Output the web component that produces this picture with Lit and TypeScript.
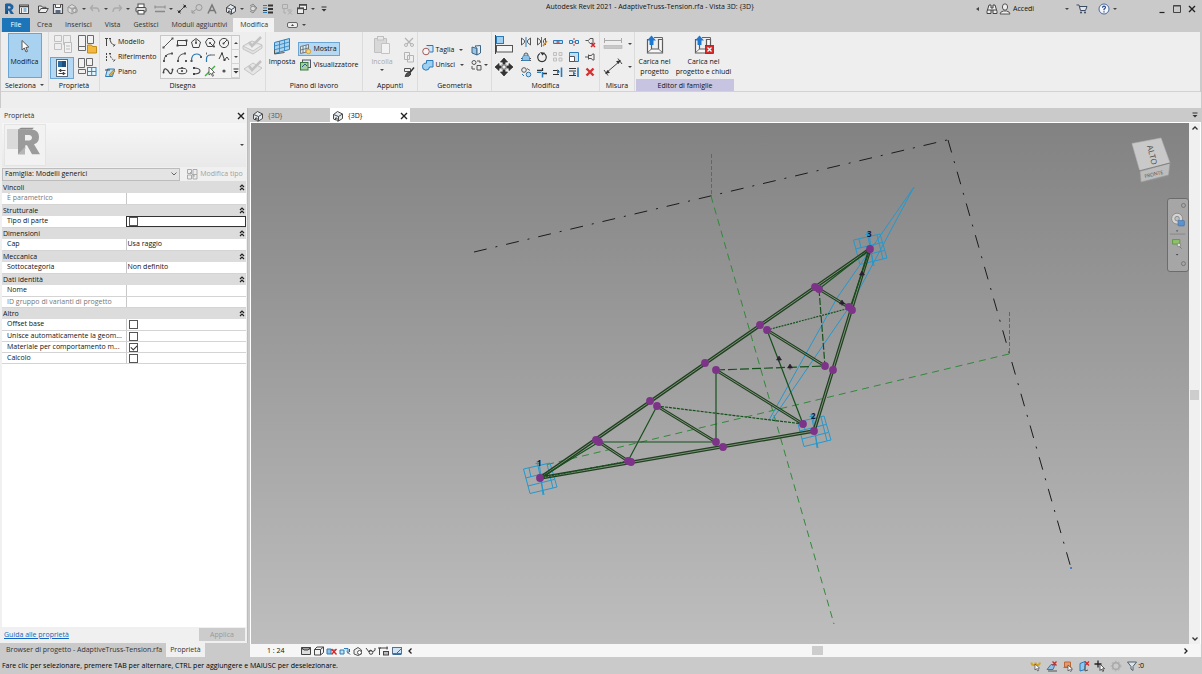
import { LitElement, html, svg, css, nothing, TemplateResult } from "lit";
import { customElement, property, state } from "lit/decorators.js";
import { classMap } from "lit/directives/class-map.js";

type Icon = { w: number; h: number; body: TemplateResult };

const K = "#4a4a4a";
const B = "#2a7ab8";
const L = "#9fd0f2";
const G = "#b4b4b4";

const icons: Record<string, Icon> = {
  // title bar
  logo: { w: 12, h: 12, body: svg`<path d="M2 1h5.500q3 .4 3 3t-2.200 3L11 11H7.600L6 7.800H5V11H2zM5 3.200v2.400h1.600q1-.2 1-1.200t-1-1.200z" fill="#2062a0" fill-rule="evenodd"/><path d="M2 1l1.500-.6h5L7.500 1zM5 7.800H3.500V11H5z" fill="#174a7c"/>` },
  home: { w: 12, h: 12, body: svg`<rect x="1.500" y="2" width="9" height="8.500" fill="#f2f2f2" stroke="${K}"/><path d="M1 3.500h10" stroke="${K}" stroke-width="1.500"/><path d="M3.500 5v5M5.500 6h3M5.500 8h3" stroke="${B}"/>` },
  open: { w: 12, h: 12, body: svg`<path d="M1.500 9.500V3h3l1 1.300h3.500V5.500M1.500 9.500L3.800 5.500h7.500L9 9.500z" fill="#eee" stroke="${K}"/>` },
  save: { w: 12, h: 12, body: svg`<path d="M1.500 1.500h9v9h-9z" fill="#e8eef4" stroke="${K}" stroke-width="1.200"/><path d="M3.500 1.500v3h5v-3" fill="#fff" stroke="${K}"/><rect x="3.500" y="7" width="5" height="3.500" fill="#5b6b7a"/>` },
  sync: { w: 12, h: 12, body: svg`<path d="M1 4l4-2.500L9 4v4.500L5 11 1 8.500zM1 4l4 2 4-2M5 6v5" fill="#ddd" stroke="#999"/><circle cx="8" cy="7.500" r="2.300" fill="none" stroke="#999"/>` },
  undo: { w: 12, h: 12, body: svg`<path d="M4 2L1.500 5 4 8M2 5h5q3 0 3 4" fill="none" stroke="#aaa" stroke-width="1.300"/>` },
  redo: { w: 12, h: 12, body: svg`<path d="M8 2l2.500 3L8 8M10 5H5Q2 5 2 9" fill="none" stroke="#aaa" stroke-width="1.300"/>` },
  print: { w: 12, h: 12, body: svg`<rect x="3" y="1" width="6" height="4" fill="#fff" stroke="${K}"/><rect x="1" y="4.500" width="10" height="4.500" rx="1" fill="#ddd" stroke="${K}"/><rect x="3" y="7.500" width="6" height="3.500" fill="#fff" stroke="${K}"/>` },
  measure: { w: 12, h: 12, body: svg`<path d="M1 4h10M1 2.500v3M11 2.500v3" stroke="#888"/><path d="M1 8.500h10" stroke="#888" stroke-width="1.500"/>` },
  dim: { w: 12, h: 12, body: svg`<path d="M2.500 9.500l7-7" stroke="${K}"/><path d="M1.500 7.500l3 3M7.500 1.500l3 3" stroke="${K}"/><path d="M2 10l3-1-2-2zM10 2L7 3l2 2z" fill="#222"/>` },
  tag: { w: 12, h: 12, body: svg`<circle cx="8" cy="4.500" r="3" fill="none" stroke="#999"/><path d="M1 9.500l4-3M1 7v3h3" fill="none" stroke="#999"/>` },
  textA: { w: 12, h: 12, body: svg`<path d="M2 10.500L6 2l4 8.500M3.500 7.500h5" fill="none" stroke="#777" stroke-width="1.500"/>` },
  view3d: { w: 12, h: 12, body: svg`<path d="M1.500 4.500L5.500 1.500l5 2.500v4.500L6.500 11H5V8H3.500v2l-2-1z" fill="#e4ebf0" stroke="${K}"/><path d="M1.500 4.500l5 2 4-2.500M6.500 6.500V11" fill="none" stroke="${K}"/>` },
  section: { w: 12, h: 12, body: svg`<path d="M3 3l3-2 4 4-4 5-3-2" fill="none" stroke="#8a8a8a"/><circle cx="6" cy="5.500" r="2.400" fill="#ddd" stroke="#8a8a8a"/>` },
  thin: { w: 12, h: 12, body: svg`<path d="M1 2.500h4M1 5h4M1 9.500h4" stroke="${B}" stroke-width="1"/><path d="M6 2.500h5M6 6h5M6 9.500h5" stroke="#333" stroke-width="2"/><path d="M1 7.500h4" stroke="#333"/>` },
  closeHidden: { w: 12, h: 12, body: svg`<path d="M1.500 1.500h5v4h-5zM6.500 7h4M7 7.500l4 4M11 7.500l-4 4M3 6v4h2" fill="none" stroke="#aaa"/>` },
  switchWin: { w: 12, h: 12, body: svg`<rect x="3.500" y="1.500" width="7" height="5" fill="#eee" stroke="${K}"/><rect x="1.500" y="5" width="6" height="5.500" fill="#eee" stroke="${K}"/><path d="M1 5.500h7M3.500 2h7" stroke="${K}" stroke-width="1.500"/>` },
  custom: { w: 12, h: 12, body: svg`<path d="M3.500 4h5" stroke="#333"/><path d="M3.500 6h5L6 8.500z" fill="#333"/>` },
  binoc: { w: 12, h: 12, body: svg`<path d="M3 2h2v3h2V2h2l2 6.500v2H7V7H5v3.500H1v-2z" fill="#eee" stroke="#444"/><path d="M5 7H1.500M7 7h3.500" stroke="#444"/>` },
  user: { w: 12, h: 12, body: svg`<ellipse cx="6" cy="4" rx="2.600" ry="3.200" fill="#eee" stroke="#555"/><path d="M1 11q.2-2.500 3.500-3h3q3.300.5 3.500 3z" fill="#eee" stroke="#555"/>` },
  cart: { w: 12, h: 12, body: svg`<path d="M.5 2H3l1.500 5.500h5L11 3.500H3.500" fill="#dfe3ea" stroke="#3c4a60"/><circle cx="5" cy="9.500" r="1" fill="#3c4a60"/><circle cx="9" cy="9.500" r="1" fill="#3c4a60"/>` },
  help: { w: 12, h: 12, body: svg`<circle cx="6" cy="6" r="5" fill="#f4f7fa" stroke="#3a5a94" stroke-width=".9"/><path d="M4.500 4.700Q4.600 3.200 6 3.200t1.500 1.300Q7.500 5.300 6 6.200v1M6 8.200v1.200" fill="none" stroke="#27468a" stroke-width="1.200"/>` },
  min: { w: 12, h: 12, body: svg`<path d="M3.500 9.500h5" stroke="#222" stroke-width="1.200"/>` },
  max: { w: 12, h: 12, body: svg`<path d="M2.500 2.500h7v7h-7z" fill="none" stroke="#444"/><path d="M2.500 3h7" stroke="#444"/>` },
  close: { w: 12, h: 12, body: svg`<path d="M3 3l6 6M9 3l-6 6" stroke="#222" stroke-width="1.400"/>` },
  play: { w: 12, h: 8, body: svg`<rect x=".5" y="1.500" width="10" height="5" rx="1.500" fill="#eee" stroke="#666"/><path d="M4 5h3L5.500 3z" fill="#444"/>` },
  // ribbon, select and properties
  cursor: { w: 12, h: 15, body: svg`<path d="M3 1.500v9.500l2.300-2 1.700 4 1.500-.7L6.900 8.500 9.800 8z" fill="#fff" stroke="#555"/>` },
  famCat: { w: 20, h: 20, body: svg`<path d="M1.500 1.500h7v6h-7zM10.500 1.500h7v9h-7zM1.500 9.500h7v6h-7z" fill="#eee" stroke="#c0c0c0"/><path d="M11.500 8.500h7v10h-7z" fill="#f2f2f2" stroke="#bbb"/><path d="M13 12h4M13 15h4" stroke="#bbb"/>` },
  famTypes: { w: 20, h: 20, body: svg`<path d="M1.500 1.500h7v11h-7zM10.500 1.500h6v8h-6zM1.500 12.500h7v4h-7z" fill="#f2f2f2" stroke="#6a6a6a"/><path d="M10.500 11h4l1 1.500h4V19h-9z" fill="#f3b93e" stroke="#c08a1c"/>` },
  propPal: { w: 20, h: 20, body: svg`<rect x="4.500" y="1.500" width="11" height="17" fill="#fff" stroke="#5a6b7c"/><rect x="6" y="3" width="8" height="6" fill="#2c6ea6"/><path d="M10 3h4v6h-4z" fill="#1f4f7c"/><path d="M6.500 12.500h7M6.500 15.500h7" stroke="#444"/><path d="M8.500 11v3M11.500 14v3" stroke="#444" stroke-width="1.500"/>` },
  famTable: { w: 20, h: 20, body: svg`<path d="M1.500 1.500h6v9h-6zM9.500 1.500h6v7h-6zM1.500 12.500h7v4h-7z" fill="#f2f2f2" stroke="#6a6a6a"/><rect x="10.500" y="10.500" width="8.500" height="8" fill="#e8f5fd" stroke="#2a8ac8"/><path d="M14.700 10.500v8M10.500 14.500H19" stroke="#2a8ac8"/>` },
  modelLine: { w: 12, h: 12, body: svg`<path d="M2.500 2v8M1 2.500h3" stroke="#444"/><path d="M6 2q0 6 5 7.500" fill="none" stroke="#444"/><path d="M5 2.500h2M9.500 10.500l1.500-2" stroke="#444"/>` },
  refLine: { w: 12, h: 12, body: svg`<path d="M2.500 2v8" stroke="#444" stroke-dasharray="2 1"/><path d="M6 2q0 6 5 7.500" fill="none" stroke="#444" stroke-dasharray="2 1"/><path d="M5 2.500h2M9.500 10.500l1.500-2" stroke="#444"/>` },
  plane: { w: 12, h: 12, body: svg`<path d="M1.500 10.500l2-7.500h7l-2 7.500z" fill="#bfe0f5" stroke="${B}"/><path d="M5 9l4.500-5 1.500 1.200L6.500 10z" fill="#e8b040" stroke="#8a6a20" stroke-width=".6"/><path d="M1 4h5" stroke="#444"/>` },
  line: { w: 12, h: 12, body: svg`<path d="M1.500 10.500l9-9" stroke="#555"/><path d="M.5 9.500h2v2h-2zM9.500.5h2v2h-2z" fill="#555"/>` },
  rect: { w: 12, h: 12, body: svg`<path d="M1.500 3.500h9v5h-9z" fill="none" stroke="#444"/><path d="M9.500 2.500h2v2h-2zM.5 7.500h2v2h-2z" fill="#444"/>` },
  poly1: { w: 12, h: 12, body: svg`<path d="M6 1.500L10.500 5 9 10.500H3L1.500 5zM6 6V2.500" fill="none" stroke="#444"/><circle cx="6" cy="6" r="1" fill="#444"/>` },
  poly2: { w: 12, h: 12, body: svg`<path d="M4 1.500h4L11 5 8.500 9.500h-5L1.500 5zM6 6l3.500 3.500" fill="none" stroke="#444"/><circle cx="6" cy="6" r="1" fill="#444"/><circle cx="10" cy="9.500" r="1" fill="#444"/>` },
  circle: { w: 12, h: 12, body: svg`<circle cx="6" cy="6" r="4.600" fill="none" stroke="#444"/><path d="M5.500 6.500L9 3" stroke="#444"/><circle cx="5.500" cy="6.500" r="1" fill="#444"/>` },
  arc1: { w: 12, h: 12, body: svg`<path d="M2 10Q2 3 9.500 2.500" fill="none" stroke="#555"/><path d="M1 9h2v2H1zM9 1.500h2v2H9zM3 4h2v2H3z" fill="#555"/>` },
  arc2: { w: 12, h: 12, body: svg`<path d="M2 10Q2 3 9 2.500" fill="none" stroke="#555"/><path d="M1 9h2v2H1zM9 9h2v2H9zM8 1.500h2v2H8z" fill="#555"/>` },
  arc3: { w: 12, h: 12, body: svg`<path d="M1.500 10q0-7 5-7 4 0 4.500 3" fill="none" stroke="${B}" stroke-width="1.200"/><path d="M.5 9h2v2h-2zM10 5h2v2h-2z" fill="#555"/>` },
  fillet: { w: 12, h: 12, body: svg`<path d="M2.500 11V8q0-4 4-4" fill="none" stroke="${B}" stroke-width="1.200"/><path d="M6 4h5M2.500 1.500v2" stroke="#666"/>` },
  spline1: { w: 12, h: 12, body: svg`<path d="M1 8L4 2l2.500 7L9 6l2 3" fill="none" stroke="#444"/><path d="M3 1.500h2v2H3zM5.500 8h2v2h-2z" fill="#444"/>` },
  spline2: { w: 12, h: 12, body: svg`<path d="M1.500 7Q2 3 4 4t3.500 4Q10 10 10.500 5" fill="none" stroke="#444" stroke-width="1.200"/><circle cx="1.500" cy="7.500" r="1" fill="#444"/><circle cx="10.500" cy="4.500" r="1" fill="#444"/>` },
  ellipse: { w: 12, h: 12, body: svg`<ellipse cx="6" cy="6" rx="4.800" ry="2.800" fill="none" stroke="#444"/><circle cx="6" cy="6" r="1.100" fill="#444"/><path d="M6 2v2" stroke="#444" stroke-width="1.500"/>` },
  halfEll: { w: 12, h: 12, body: svg`<path d="M4 3q6 0 6 3T4 9" fill="none" stroke="#444" stroke-width="1.100"/><path d="M3 2h2v2H3zM3 8h2v2H3z" fill="#444"/>` },
  pick: { w: 12, h: 12, body: svg`<path d="M1 11L11 1" stroke="#44b044" stroke-width="1.500"/><path d="M5 2v8l2-1.700 1.500 3 1-.5L8.200 8l2.300-.5z" fill="#fff" stroke="#444" stroke-width=".8"/>` },
  point: { w: 12, h: 12, body: svg`<circle cx="6" cy="6" r="1.600" fill="#555"/>` },
  drawFace: { w: 22, h: 20, body: svg`<path d="M1 11l9-5 10 4-9 6zM1 11v3l10 5 9-6v-3" fill="#e2e2e2" stroke="#c4c4c4"/><path d="M7 7l3 4 9-9" fill="none" stroke="#c2c2c2" stroke-width="2.500"/>` },
  drawWp: { w: 22, h: 20, body: svg`<path d="M2 11l9-6 9 5-9 7z" fill="#e6e6e6" stroke="#c4c4c4"/><path d="M7 8l3 4 9-9" fill="none" stroke="#c2c2c2" stroke-width="2.500"/>` },
  setWp: { w: 18, h: 18, body: svg`<path d="M1.500 5.500l15-4v11l-15 4z" fill="#a9d3ef" stroke="#3080b8"/><path d="M6.500 4v11.200M11.500 2.700V14M1.500 9l15-4M1.500 12.800l15-4" stroke="#3080b8" stroke-width=".8"/><path d="M1.500 13v4l10-1.500" fill="none" stroke="#555"/>` },
  showWp: { w: 13, h: 12, body: svg`<path d="M1.500 3.500l8-2v7l-8 2zM4 3v7M7 2.200v7M1.500 7l8-2" fill="#d8ecfa" stroke="#666" stroke-width=".8"/><circle cx="9.500" cy="8.500" r="2.200" fill="#f6d670" stroke="#d0962a" stroke-width=".8"/>` },
  viewer: { w: 13, h: 12, body: svg`<rect x="3.500" y="1" width="8" height="7.500" fill="#dfe9f2" stroke="#556"/><rect x="1.500" y="3.500" width="7.500" height="7.500" fill="#a5cfa0" stroke="#3d7a44"/><path d="M3 8l3-3 2 2" fill="none" stroke="#2d5f86"/>` },
  // clipboard and geometry
  paste: { w: 18, h: 20, body: svg`<path d="M1.500 3.500h12v14h-12z" fill="#d8d8d8" stroke="#c0c0c0"/><rect x="4.500" y="1.500" width="6" height="3.500" fill="#e8e8e8" stroke="#c0c0c0"/><path d="M8.500 8.500h8v10h-8z" fill="#f2f2f2" stroke="#c4c4c4"/>` },
  cut: { w: 12, h: 12, body: svg`<path d="M2 2l6 6M10 2L4 8" stroke="${G}" stroke-width="1.300"/><circle cx="3" cy="9" r="1.500" fill="none" stroke="${G}"/><circle cx="9" cy="9" r="1.500" fill="none" stroke="${G}"/>` },
  copy: { w: 12, h: 12, body: svg`<path d="M1.500 1.500h5v7h-5zM4.500 4.500h6v6.500h-6z" fill="#efefef" stroke="${G}"/>` },
  match: { w: 12, h: 12, body: svg`<path d="M1.500 2.500h6v3h-6z" fill="#eee" stroke="#555"/><path d="M11 1.500L6.500 7" stroke="#333" stroke-width="1.500"/><path d="M2 10.500q1-4 4-4.500l2 2q-1 3-6 2.500z" fill="#555" stroke="#333" stroke-width=".8"/>` },
  cutGeo: { w: 12, h: 12, body: svg`<path d="M4.500 1.500h6.500V8H8" fill="#cfe6f7" stroke="${B}"/><circle cx="4" cy="7.500" r="3.300" fill="#f6f6f6" stroke="#a05a5a"/>` },
  joinGeo: { w: 12, h: 12, body: svg`<path d="M4.500 1.500h6.500V8H7.500A3.500 3.500 0 1 1 4.500 4.200z" fill="${L}" stroke="${B}"/>` },
  faces: { w: 12, h: 12, body: svg`<path d="M2 3l5 1.500V11L2 9z" fill="#9cc4e4" stroke="#3d6585"/><path d="M5 2l5.500-.5V9L7 11V4.500z" fill="#e4eef6" stroke="#3d6585"/>` },
  demolish: { w: 12, h: 12, body: svg`<circle cx="4" cy="3.500" r="2" fill="none" stroke="#555"/><path d="M7 6.500h4V11H7zM2 7v3h3M7 2h3v2" fill="none" stroke="#555"/>` },
  // modify
  align: { w: 20, h: 19, body: svg`<path d="M1.500 0v19" stroke="#444"/><rect x="2.500" y="1.500" width="7" height="7" fill="${L}" stroke="${B}"/><rect x="2.500" y="10.500" width="16" height="6.500" fill="#f4f4f4" stroke="#555"/>` },
  move: { w: 20, h: 20, body: svg`<rect x="8" y="8" width="4" height="4" fill="none" stroke="#666"/><path d="M10 1l3.500 4H11v2H9V5H6.500zM10 19l3.500-4H11v-2H9v2H6.500zM1 10l4-3.500V9h2v2H5v2.500zM19 10l-4-3.500V9h-2v2h2v2.500z" fill="#333" stroke="#333" stroke-width=".8"/>` },
  mirror1: { w: 12, h: 12, body: svg`<path d="M1.500 2v7l3-2.500v-2zM10.500 2v7l-3-2.500v-2z" fill="#f0f0f0" stroke="#555"/><path d="M6 1v10" stroke="${B}"/>` },
  mirror2: { w: 12, h: 12, body: svg`<path d="M1.500 2v7l3-2.500v-2zM9.500 2v7l-2-2.500v-2z" fill="#f0f0f0" stroke="#555"/><path d="M5.500 1v10" stroke="${B}"/><path d="M7 10l4-5" stroke="#d08a2a" stroke-width="1.500"/>` },
  split1: { w: 12, h: 12, body: svg`<path d="M1.500 4.500h9v3h-9z" fill="#bfe0f5" stroke="${B}"/><path d="M4.500 6h3" stroke="#c04040" stroke-width="1.500"/>` },
  split2: { w: 12, h: 12, body: svg`<path d="M1.500 4.500h3v3h-3zM7.500 4.500h3v3h-3z" fill="#dceefa" stroke="${B}"/><path d="M6 2v8" stroke="#c04040" stroke-dasharray="2 1"/>` },
  unpin: { w: 12, h: 12, body: svg`<path d="M1.500 4.500h3l1.500-2h3v5H6l-1.500-2" fill="#eee" stroke="#555"/><path d="M7 7l4 4M11 7l-4 4" stroke="#d02828" stroke-width="1.500"/>` },
  offset: { w: 12, h: 12, body: svg`<path d="M1 9.500h10M1 7.500h3V4q0-2 2-2t2 2v3.500h3" fill="none" stroke="#555"/><path d="M2.500 9.500h7V6q-1-2-3.500-2T2.500 6z" fill="#8fc1e6" stroke="${B}" stroke-width=".7"/>` },
  rotate: { w: 12, h: 12, body: svg`<path d="M4 2.500a4.300 4.300 0 1 0 4 0" fill="none" stroke="#333" stroke-width="1.200"/><path d="M4 1l5 .8L6.500 4.500z" fill="#333"/>` },
  array: { w: 12, h: 12, body: svg`<path d="M1.500 1.500h3v3h-3zM7 1.500h3v3H7zM1.500 7h3v3h-3zM7 7h3v3H7z" fill="#e6e6e6" stroke="#c0c0c0"/>` },
  scale: { w: 12, h: 12, body: svg`<path d="M1.500 1.500h9v9h-9z" fill="#bfe0f5" stroke="${B}"/><path d="M1.500 5.500h5v5h-5z" fill="#fff" stroke="#555"/>` },
  pin: { w: 12, h: 12, body: svg`<path d="M1 6h3.500M4.500 3.500v5M4.500 4.500h3l1-1.500h1.500v6H8.500l-1-1.500h-3" fill="none" stroke="#555"/>` },
  copyEl: { w: 12, h: 12, body: svg`<circle cx="4" cy="4" r="2.300" fill="none" stroke="#555"/><circle cx="8.500" cy="8.500" r="2.300" fill="#bfe0f5" stroke="${B}"/><path d="M7 2.500l3 2M2 8l2 2" stroke="${B}"/>` },
  trim: { w: 12, h: 12, body: svg`<path d="M1 4.500h5M6.500 2v3M6 7.500h5" stroke="#333" stroke-width="1.300"/><path d="M6.500 6v5.500" stroke="${B}" stroke-width="1.500"/><path d="M1 6.500h4" stroke="${B}"/>` },
  trim1: { w: 12, h: 12, body: svg`<path d="M1 4.500h6M1 8.500h6" stroke="#333" stroke-width="1.200"/><path d="M5 3l3 3-3 2" fill="${B}"/><path d="M9.500 1.500v9.500" stroke="${B}" stroke-width="1.600"/>` },
  trim2: { w: 12, h: 12, body: svg`<path d="M1 2.500h7M1 5h7M1 9.500h7" stroke="#333" stroke-width="1.100"/><path d="M5 5.500l3 2-3 2z" fill="${B}"/><path d="M10 1.500v9.500" stroke="${B}" stroke-width="1.600"/>` },
  del: { w: 12, h: 12, body: svg`<path d="M2.500 2.500l7 7M9.500 2.500l-7 7" stroke="#d83030" stroke-width="2.400"/>` },
  measDist: { w: 20, h: 14, body: svg`<path d="M1 3.500h18M1.500 1v5M18.500 1v5" stroke="#aaa"/><rect x="1" y="8.500" width="18" height="3" fill="#c8c8c8" stroke="#b0b0b0" stroke-width=".6"/>` },
  measDim: { w: 20, h: 20, body: svg`<path d="M3 16L17 4" stroke="#444"/><path d="M1 13l4 5.500M15 1.500L19 7" stroke="#444"/><path d="M2 17l5-1.200-2.500-2.800zM18 3l-5 1.200L15.500 7z" fill="#333"/>` },
  load: { w: 18, h: 19, body: svg`<path d="M1.500 4.500h4V14h7V4.500h4V18h-15z" fill="#f6f6f6" stroke="#5c5c5c" stroke-width="1.200"/><path d="M1.500 17.500l4-3.500M16.500 17.500l-4-3.500" stroke="#777"/><path d="M8 2.500h8.500v4" fill="none" stroke="#666"/><path d="M5.500 .5L10 5.500H7.500V10h-4V5.500H1z" fill="#1f78d0"/>` },
  loadClose: { w: 20, h: 19, body: svg`<path d="M1.500 4.500h4V14h7V4.500h4V18h-15z" fill="#f6f6f6" stroke="#5c5c5c" stroke-width="1.200"/><path d="M1.500 17.500l4-3.500" stroke="#777"/><path d="M8 2.500h8.500v4" fill="none" stroke="#666"/><path d="M5.500 .5L10 5.500H7.500V10h-4V5.500H1z" fill="#1f78d0"/><rect x="11.500" y="10.500" width="8" height="8" fill="#d62a2a" stroke="#a81818" stroke-width=".8"/><path d="M13.500 12.500l4 4M17.500 12.500l-4 4" stroke="#fff" stroke-width="1.200"/>` },
  // properties
  bigR: { w: 40, h: 40, body: svg`<rect x="2" y="4" width="19" height="20" fill="#dadada"/><g transform="translate(3 -1) scale(1 .92)"><path d="M10 6h14q7 1 7 8 0 6-5 8l6 11h-8l-5-10h-2v10h-7z" fill="#9b9b9b"/><path d="M17 12v6h4q3-.5 3-3t-3-3z" fill="#efefef"/><path d="M10 6l3-2h13l-2 2z" fill="#8a8a8a"/><path d="M10 33l7-8v8z" fill="#b6b6b6"/></g>` },
  editType: { w: 12, h: 12, body: svg`<path d="M1.500 1.500h4v4h-4zM7 1.500h4v5H7zM1.500 7h4v4h-4zM7 6.500h4V11H7z" fill="#eee" stroke="#aaa"/><path d="M4 4l4 4M8 6v3" stroke="#aaa"/>` },
  collapse: { w: 6, h: 8, body: svg`<path d="M1 4l2-2 2 2M1 7l2-2 2 2" fill="none" stroke="#222" stroke-width="1.200"/>` },
  // view control bar
  vDetail: { w: 12, h: 10, body: svg`<path d="M1.500 1.500h9v7h-9zM1.500 1.500L4 4h4l2.500-2.500M1.500 3h9" fill="#ddd" stroke="#444"/>` },
  vStyle: { w: 12, h: 10, body: svg`<path d="M1.500 3.500h6V9h-6zM1.500 3.500l2.500-2.500h6.500L7.500 3.500M10.500 1v5.500L7.500 9" fill="#f4f4f4" stroke="#444"/>` },
  vSun: { w: 12, h: 10, body: svg`<path d="M1 3h4v5H1zM5 4h5" fill="#8fc1e6" stroke="${B}"/><path d="M5.500 3l5 5.500M10.500 3l-5 5.500" stroke="#d02828" stroke-width="1.400"/>` },
  vCrop: { w: 12, h: 10, body: svg`<path d="M1 4h4v4H1zM5 2.500h4v5" fill="#bfe0f5" stroke="${B}"/><path d="M8 5.500l3 3M10.500 3v3" stroke="#555"/>` },
  vLock: { w: 12, h: 10, body: svg`<path d="M2 4l4-2.500L9.500 4v4L6 9.500 2 8z" fill="#eee" stroke="#555"/><circle cx="7.500" cy="6.500" r="2" fill="#fff" stroke="#555"/>` },
  vGlass: { w: 12, h: 10, body: svg`<path d="M1 2l3 4 1-2 2 1" fill="none" stroke="#444"/><circle cx="6" cy="6.500" r="1.800" fill="none" stroke="#444"/><path d="M8 5.500Q11 5 10 2" fill="none" stroke="#444"/>` },
  vHide: { w: 12, h: 10, body: svg`<path d="M1.500 9V2h8.500" fill="none" stroke="#444"/><rect x="5.500" y="5.500" width="5" height="3.500" fill="#bbb" stroke="#444"/><path d="M0 2h3M9 .5v3" stroke="#444"/>` },
  vReveal: { w: 12, h: 10, body: svg`<rect x="1.500" y="1.500" width="9" height="6" fill="#cfe4f4" stroke="#5a7088"/><path d="M1.500 8.500h9M6 7l4-4" stroke="#3a6a9a"/>` },
  left: { w: 6, h: 8, body: svg`<path d="M4.500 1.500L2 4l2.500 2.500" fill="none" stroke="#222" stroke-width="1.300"/>` },
  right: { w: 6, h: 8, body: svg`<path d="M1.500 1.500L4 4 1.500 6.500" fill="none" stroke="#222" stroke-width="1.300"/>` },
  up: { w: 8, h: 6, body: svg`<path d="M1.500 4.500L4 2l2.500 2.500" fill="none" stroke="#333" stroke-width="1.300"/>` },
  down: { w: 8, h: 6, body: svg`<path d="M1.500 1.500L4 4l2.500-2.500" fill="none" stroke="#333" stroke-width="1.300"/>` },
  drop: { w: 8, h: 6, body: svg`<path d="M1.500 1.500L4 4l2.500-2.500" fill="none" stroke="#666" stroke-width="1"/>` },
  // status bar
  sLink: { w: 12, h: 12, body: svg`<path d="M1.500 2.500q0 2.500 2 2.500t2-2.500q0 2.500 2 2.500t2.500-2.500" fill="none" stroke="#d9a520" stroke-width="2"/><path d="M5 4v6l1.500-1.300 1.200 2.300 1-.5-1-2.200 1.800-.3z" fill="#fff" stroke="#444" stroke-width=".7"/>` },
  sUnder: { w: 12, h: 12, body: svg`<path d="M1 9.500l4-5h4l-2 5z" fill="#8fc1e6" stroke="#48749a"/><path d="M6.500 1.500l4 4M10.500 1.500l-4 4" stroke="#d02828" stroke-width="1.300"/><path d="M2 11h9" stroke="#555"/>` },
  sPin: { w: 12, h: 12, body: svg`<path d="M2.500 2h6v5h-6zM1.500 7.500h8" fill="#e79a68" stroke="#b8683a"/><path d="M6 5v6l1.500-1.300 1 1.800 1-.5-.8-1.900h1.800z" fill="#fff" stroke="#444" stroke-width=".7"/>` },
  sFace: { w: 12, h: 12, body: svg`<path d="M2 3.500l5-2v8l-5 1.500z" fill="#8fc8ec" stroke="${B}"/><path d="M7 1.500l4 4M11 1.500l-4 4" stroke="#d02828" stroke-width="1.300"/><path d="M7 6v5l3-1" fill="none" stroke="#555"/>` },
  sDrag: { w: 12, h: 12, body: svg`<path d="M4 .5v7M.5 4h7" stroke="#222" stroke-width="1.300"/><path d="M6 4v6.500L7.500 9l1.200 2.500 1-.5-1.100-2.300h2z" fill="#fff" stroke="#333" stroke-width=".8"/>` },
  sGear: { w: 12, h: 12, body: svg`<circle cx="6" cy="6" r="3.300" fill="none" stroke="#a8a8a8" stroke-width="1.500"/><circle cx="6" cy="6" r="4.800" fill="none" stroke="#a8a8a8" stroke-width="1" stroke-dasharray="1.500 2"/>` },
  sFilter: { w: 12, h: 12, body: svg`<path d="M1.500 2h9L7 6.500v4l-2-1.500V6.500z" fill="#dce4ea" stroke="#50606c"/>` },
};

const ic = (name: string) => {
  const i = icons[name];
  return html`<svg width=${i.w} height=${i.h} viewBox="0 0 ${i.w} ${i.h}" aria-hidden="true">${i.body}</svg>`;
};

const base = css`
  * { box-sizing: border-box; }
  svg { display: block; flex: none; }
  button, input, select { font: inherit; color: inherit; margin: 0; padding: 0; }
  button { background: none; border: 0; display: flex; align-items: center; justify-content: center; white-space: nowrap; }
  .caret { width: 0; height: 0; border: 2px solid transparent; border-top-color: #444; border-bottom: 0; flex: none; }
`;

/* ---------------------------------------------------------------- title bar */
@customElement("title-bar")
class TitleBar extends LitElement {
  static styles = [base, css`
    :host { display: flex; align-items: center; height: 18px; padding: 0 3px 1px 1px; }
    .tools, .right { display: flex; align-items: center; }
    .i { width: 15px; height: 16px; }
    .c { width: 7px; height: 16px; }
    .gap { width: 2px; }
    .wide { width: 4px; }
    .title { margin-left: 215px; margin-bottom: 3px; white-space: nowrap; }
    .right { margin-left: auto; }
    .login { gap: 2px; width: 64px; justify-content: flex-start; }
    .sep { width: 7px; }
    .back { width: 0; height: 0; border: 2px solid transparent; border-right: 3px solid #444; border-left: 0; margin-right: 5px; }
    .win { width: 15px; height: 16px; }
    .space { width: 36px; }
  `];
  render() {
    const b = (n: string, label = n) => html`<button class="i" aria-label=${label}>${ic(n)}</button>`;
    const c = html`<button class="c" aria-label="Altro"><span class="caret"></span></button>`;
    const g = html`<span class="gap"></span>`;
    const w = html`<span class="wide"></span>`;
    return html`
      <div class="tools">
        ${b("logo")}${b("home")}${w}${b("open")}${b("save")}${b("sync")}${c}${b("undo")}${c}${b("redo")}${c}${g}
        ${b("print")}${w}${b("measure")}${c}${b("dim")}${b("tag")}${b("textA")}${w}${b("view3d")}${c}${b("section")}${b("thin")}${w}
        ${b("closeHidden")}${b("switchWin")}${c}${b("custom")}
      </div>
      <div class="title">Autodesk Revit 2021 - AdaptiveTruss-Tension.rfa - Vista 3D: {3D}</div>
      <div class="right">
        <span class="back"></span>${b("binoc")}
        <button class="login">${ic("user")}<span>Accedi</span></button>
        ${c}${g}${g}${b("cart")}<span class="sep"></span>${b("help")}${c}<span class="space"></span>
        <button class="win" aria-label="Riduci">${ic("min")}</button>
        <button class="win" aria-label="Ingrandisci">${ic("max")}</button>
        <button class="win" aria-label="Chiudi">${ic("close")}</button>
      </div>`;
  }
}

/* ------------------------------------------------------------------ ribbon */
@customElement("app-ribbon")
class AppRibbon extends LitElement {
  @state() tab = "Modifica";
  static styles = [base, css`
    :host { display: block; }
    .tabs { display: flex; height: 14px; padding-left: 2px; align-items: stretch; }
    .tab { padding: 0 6px 0 7px; color: #333; }
    .file { width: 28px; background: #1c75b9; color: #fff; padding: 0; }
    .on { background: #f2f2f2; }
    .more { margin-left: 13px; gap: 3px; }
    .ribbon { display: flex; height: 60px; background: #eeeeee; border-bottom: 1px solid #d2d2d2; margin: 0 2px 0 1px; }
    .options { height: 16px; background: #eeeeee; margin: 0 1px; }
    .panel { display: flex; flex-direction: column; border-right: 1px solid #dcdcdc; }
    .panel.last { border-right: 0; }
    .body { display: flex; flex: 1; align-items: flex-start; justify-content: center; }
    .name { height: 12px; line-height: 11px; text-align: center; white-space: nowrap; display: flex; justify-content: center; align-items: center; gap: 4px; }
    .last .name { background: #c7c4e2; margin: 0 0 0 1px; }
    .w47 { width: 48px; } .w51 { width: 51px; } .w166 { width: 166px; } .w97 { width: 97px; }
    .w55 { width: 55px; } .w74 { width: 74px; } .w108 { width: 108px; } .w35 { width: 35px; } .w99 { width: 99px; }
    .big { flex-direction: column; justify-content: flex-start; line-height: 10px; }
    .modify { width: 34px; height: 45px; background: #a9d1f0; border: 1px solid #6ba5d4; margin-top: 1px; padding-top: 5px; gap: 3px; }
    .props { display: grid; grid-template-columns: 25px 23px; grid-auto-rows: 23px; align-items: start; padding-top: 2px; }
    .sel { background: #b5d8f3; border: 1px solid #6ba5d4; width: 24px; height: 22px; }
    .col { display: flex; flex-direction: column; }
    .r { height: 15px; justify-content: flex-start; gap: 2px; }
    .lines { width: 56px; padding-top: 2px; margin-left: 4px; }
    .palette { display: grid; grid-template-columns: repeat(5, 14px) 8px; grid-auto-rows: 14px; border: 1px solid #c8c8c8; background: #f3f3f3; height: 44px; margin-top: 3px; align-items: center; justify-items: center; }
    .palette .s { width: 9px; height: 14px; border-left: 1px solid #d4d4d4; border-bottom: 1px solid #d4d4d4; }
    .sup { width: 0; height: 0; border: 2px solid transparent; border-bottom-color: #444; border-top: 0; }
    .grey { gap: 3px; padding-top: 3px; width: 25px; align-items: center; }
    .set { width: 31px; padding-top: 5px; gap: 2px; }
    .wp { gap: 1px; padding-top: 10px; align-items: flex-start; }
    .wp .r { gap: 2px; padding-right: 2px; border: 1px solid transparent; }
    .wp .show { background: #b5d8f3; border-color: #6ba5d4; height: 14px; }
    .dis { color: #a8a8a8; }
    .paste { width: 34px; padding-top: 3px; gap: 2px; }
    .clip { padding-top: 2px; margin-left: 4px; }
    .geo { padding-top: 10px; }
    .geo .r { gap: 2px; }
    .geo .t { width: 48px; }
    .geo .t .caret { margin-left: 3px; }
    .mod { display: grid; grid-template-columns: repeat(5, 16px); grid-auto-rows: 15px; padding-top: 2px; margin-left: 4px; }
    .bigs { gap: 3px; padding-top: 3px; }
    .mis { gap: 6px; padding-top: 5px; }
    .mis button { gap: 5px; }
    .load { padding-top: 3px; gap: 3px; }
    .wide { width: 60px; }
    .narrow { width: 38px; }
  `];
  private sq(names: string[]) {
    return names.map((n) => html`<button aria-label=${n}>${ic(n)}</button>`);
  }
  render() {
    const car = html`<span class="caret"></span>`;
    const tabs = ["Crea", "Inserisci", "Vista", "Gestisci", "Moduli aggiuntivi", "Modifica"];
    return html`
      <nav class="tabs">
        <button class="tab file">File</button>
        ${tabs.map((t) => html`<button class=${classMap({ tab: true, on: t === this.tab })} @click=${() => (this.tab = t)}>${t}</button>`)}
        <button class="more" aria-label="Riduci a schede">${ic("play")}${car}</button>
      </nav>
      <div class="ribbon">
        <section class="panel w47">
          <div class="body"><button class="big modify">${ic("cursor")}<span>Modifica</span></button></div>
          <div class="name">Seleziona ${car}</div>
        </section>
        <section class="panel w51">
          <div class="body"><div class="props">
            <button aria-label="Categoria e parametri">${ic("famCat")}</button>
            <button aria-label="Tipi di famiglia">${ic("famTypes")}</button>
            <button class="sel" aria-label="Tavolozza">${ic("propPal")}</button>
            <button aria-label="Tabella">${ic("famTable")}</button>
          </div></div>
          <div class="name">Proprietà</div>
        </section>
        <section class="panel w166">
          <div class="body">
            <div class="col lines">
              <button class="r">${ic("modelLine")}Modello</button>
              <button class="r">${ic("refLine")}Riferimento</button>
              <button class="r">${ic("plane")}Piano</button>
            </div>
            <div class="palette">
              ${this.sq(["line", "rect", "poly1", "poly2", "circle"])}<button class="s" aria-label="Su"><span class="sup"></span></button>
              ${this.sq(["arc1", "arc2", "arc3", "fillet", "spline1"])}<button class="s" aria-label="Giù">${car}</button>
              ${this.sq(["spline2", "ellipse", "halfEll", "pick", "point"])}<button class="s" aria-label="Espandi">${ic("custom")}</button>
            </div>
            <div class="col grey">${this.sq(["drawFace", "drawWp"])}</div>
          </div>
          <div class="name">Disegna</div>
        </section>
        <section class="panel w97">
          <div class="body">
            <button class="big set">${ic("setWp")}<span>Imposta</span></button>
            <div class="col wp">
              <button class="r show">${ic("showWp")}Mostra</button>
              <button class="r">${ic("viewer")}Visualizzatore</button>
            </div>
          </div>
          <div class="name">Piano di lavoro</div>
        </section>
        <section class="panel w55">
          <div class="body">
            <button class="big paste dis">${ic("paste")}<span>Incolla</span>${car}</button>
            <div class="col clip"><button class="r" aria-label="Taglia">${ic("cut")}</button><button class="r" aria-label="Copia">${ic("copy")}</button><button class="r" aria-label="Corrispondenza">${ic("match")}</button></div>
          </div>
          <div class="name">Appunti</div>
        </section>
        <section class="panel w74">
          <div class="body">
            <div class="col geo"><button class="r t">${ic("cutGeo")}Taglia ${car}</button><button class="r t">${ic("joinGeo")}Unisci ${car}</button></div>
            <div class="col geo"><button class="r" aria-label="Facce">${ic("faces")}</button><button class="r" aria-label="Demolisci">${ic("demolish")}${car}</button></div>
          </div>
          <div class="name">Geometria</div>
        </section>
        <section class="panel w108">
          <div class="body">
            <div class="col bigs">${this.sq(["align", "move"])}</div>
            <div class="mod">${this.sq(["mirror1", "mirror2", "split1", "split2", "unpin", "offset", "rotate", "array", "scale", "pin", "copyEl", "trim", "trim1", "trim2", "del"])}</div>
          </div>
          <div class="name">Modifica</div>
        </section>
        <section class="panel w35">
          <div class="body"><div class="col mis">
            <button aria-label="Misura">${ic("measDist")}${car}</button>
            <button aria-label="Quota">${ic("measDim")}${car}</button>
          </div></div>
          <div class="name">Misura</div>
        </section>
        <section class="panel last w99">
          <div class="body">
            <button class="big load narrow">${ic("load")}<span>Carica nel<br />progetto</span></button>
            <button class="big load wide">${ic("loadClose")}<span>Carica nel<br />progetto e chiudi</span></button>
          </div>
          <div class="name">Editor di famiglie</div>
        </section>
      </div>
      <div class="options"></div>`;
  }
}

/* -------------------------------------------------------------- properties */
type Row = { label: string; value?: string; check?: boolean; grey?: boolean; focus?: boolean };
const groups: { name: string; rows: Row[] }[] = [
  { name: "Vincoli", rows: [{ label: "È parametrico", value: "", grey: true }] },
  { name: "Strutturale", rows: [{ label: "Tipo di parte", check: false, focus: true }] },
  { name: "Dimensioni", rows: [{ label: "Cap", value: "Usa raggio" }] },
  { name: "Meccanica", rows: [{ label: "Sottocategoria", value: "Non definito" }] },
  { name: "Dati identità", rows: [{ label: "Nome", value: "" }, { label: "ID gruppo di varianti di progetto", value: "", grey: true }] },
  { name: "Altro", rows: [
    { label: "Offset base", check: false },
    { label: "Unisce automaticamente la geom...", check: false },
    { label: "Materiale per comportamento m...", check: true },
    { label: "Calcolo", check: false },
  ] },
];

@customElement("property-panel")
class PropertyPanel extends LitElement {
  static styles = [base, css`
    :host { display: flex; flex-direction: column; width: 248px; flex: none; padding: 0 1px 0 2px; border-right: 1px solid #bdbdbd; background: #f0f0f0; }
    .head { display: flex; height: 15px; align-items: center; justify-content: space-between; padding-left: 2px; color: #333; }
    .head button { width: 10px; }
    .type { height: 44px; display: flex; align-items: center; justify-content: space-between; background: linear-gradient(#f6f6f6, #e9e9e9); padding: 0 2px; }
    .thumb { width: 42px; height: 42px; background: #f2f2f2; border: 1px solid #e4e4e4; }
    .pick { display: flex; height: 14px; gap: 3px; }
    .combo { position: relative; flex: 1; display: flex; align-items: center; }
    select { appearance: none; width: 100%; height: 13px; border: 1px solid #bcbcbc; border-radius: 0; background: #e4e4e4; color: #111; padding-left: 2px; }
    .combo svg { position: absolute; right: 2px; top: 4px; }
    .edit { width: 63px; gap: 2px; color: #a0a0a0; }
    .grid { flex: 1; background: #fff; }
    table { width: 100%; border-collapse: collapse; table-layout: fixed; }
    th, td { padding: 0; text-align: left; font-weight: normal; white-space: nowrap; }
    .g th { height: 12px; line-height: 11px; background: #dcdcdc; color: #111; padding-left: 1px; }
    .gh { display: flex; justify-content: space-between; align-items: center; padding-right: 1px; }
    .r th, .r td { height: 11px; line-height: 10px; border-bottom: 1px solid #d4d4d4; color: #111; }
    .r th { padding-left: 5px; border-right: 1px solid #c8c8c8; }
    .r td { padding-left: 1px; }
    .r .grey { color: #777; }
    .r .focus { outline: 1px solid #333; outline-offset: -1px; }
    .nm { width: 124px; }
    input { appearance: none; display: block; width: 9px; height: 9px; border: 1px solid #555; background: #fff; margin: 1px 0 0 1px; }
    input:checked::after { content: ""; display: block; width: 3px; height: 5px; margin-left: 2px; border: solid #333; border-width: 0 1px 1px 0; transform: rotate(45deg); }
    .foot { display: flex; height: 16px; align-items: center; justify-content: space-between; padding: 0 1px 1px 2px; }
    a { color: #1464c0; }
    .apply { width: 46px; height: 13px; background: #cccccc; color: #999; }
    .dock { display: flex; background: #cacaca; height: 14px; margin-left: -2px; margin-right: -2px; padding-left: 2px; }
    .dock button { padding: 0 4px 0 4px; color: #333; }
    .dock .on { background: #f0f0f0; }
  `];
  private row(r: Row, n: string) {
    const id = `p-${n}`;
    const isCheck = r.check !== undefined;
    return html`<tr class="r">
      <th scope="row" class=${classMap({ grey: !!r.grey })}>${isCheck ? html`<label for=${id}>${r.label}</label>` : r.label}</th>
      <td class=${classMap({ focus: !!r.focus })}>${isCheck ? html`<input type="checkbox" id=${id} .checked=${!!r.check} />` : r.value}</td>
    </tr>`;
  }
  render() {
    return html`
      <div class="head"><span>Proprietà</span><button aria-label="Chiudi">${ic("close")}</button></div>
      <div class="type"><div class="thumb">${ic("bigR")}</div><span class="caret"></span></div>
      <div class="pick">
        <div class="combo"><select aria-label="Famiglia"><option>Famiglia: Modelli generici</option></select>${ic("drop")}</div>
        <button class="edit" disabled>${ic("editType")}Modifica tipo</button>
      </div>
      <div class="grid">
        <table>
          <colgroup><col class="nm" /><col /></colgroup>
          ${groups.map((g, i) => html`<tbody>
            <tr class="g"><th colspan="2"><div class="gh">${g.name}<button aria-label="Comprimi">${ic("collapse")}</button></div></th></tr>
            ${g.rows.map((r, j) => this.row(r, `${i}-${j}`))}
          </tbody>`)}
        </table>
      </div>
      <div class="foot"><a href="#">Guida alle proprietà</a><button class="apply" disabled>Applica</button></div>
      <div class="dock"><button>Browser di progetto - AdaptiveTruss-Tension.rfa</button><button class="on">Proprietà</button></div>`;
  }
}

/* ------------------------------------------------------------------ canvas */
const chords = [[540, 478, 870, 249], [870, 249, 814, 431], [814, 431, 540, 478]];
const webs = [[599, 442, 628, 461], [657, 406, 716, 442], [716, 370, 803, 424], [767, 330, 825, 366], [819, 289, 850, 308]];
const thinLines: [number, number, number, number, string][] = [
  [599, 442, 716, 442, ""], [657, 406, 628, 461, ""], [716, 370, 716, 442, ""], [716, 370, 825, 366, "9 3"],
  [657, 406, 803, 424, "3 1"], [767, 330, 803, 424, ""], [767, 330, 850, 308, "2 1"], [819, 289, 825, 366, "7 2"],
  [540, 478, 628, 461, "2 1"], [540, 478, 599, 442, ""], [870, 249, 819, 289, ""], [870, 249, 850, 308, ""],
];
const nodes = [
  [540, 478], [596, 440], [599, 442], [650, 401], [657, 406], [705, 363], [716, 370], [760, 325], [767, 330],
  [815, 287], [819, 289], [870, 249], [849, 307], [852, 310], [833, 370], [825, 366], [814, 431], [803, 424],
  [716, 442], [723, 447], [628, 461], [631, 462],
];
const anchors: [number, number, string][] = [[540, 478, "1"], [814, 431, "2"], [870, 249, "3"]];
const arrows = [[842, 303], [779, 359], [790, 367], [862, 274]];

@customElement("model-view")
class ModelView extends LitElement {
  static styles = [base, css`
    :host { display: flex; flex-direction: column; flex: 1; min-width: 0; padding-right: 1px; background: #cacaca; }
    .tabs { display: flex; height: 14px; align-items: stretch; }
    .tab { display: flex; width: 80px; align-items: center; gap: 4px; padding: 1px 1px 0 2px; color: #555; }
    .on { background: #fff; color: #111; }
    .x { margin-left: auto; width: 10px; }
    .list { margin-left: auto; }
    .mid { display: flex; flex: 1; min-height: 0; border: 1px solid #fff; border-bottom: 0; }
    .scene { position: relative; flex: 1; min-width: 0; background: linear-gradient(#828282, #bebebe); overflow: hidden; }
    .drawing { width: 100%; height: 100%; }
    .vbar { width: 11px; background: #f0f0f0; display: flex; flex-direction: column; align-items: center; padding: 2px 0; }
    .vthumb { width: 9px; height: 10px; background: #cdcdcd; }
    .grow { flex: 11; } .grow2 { flex: 10; }
    .cube { position: absolute; right: 16px; top: 14px; }
    .nav { position: absolute; right: 0; top: 75px; width: 22px; height: 74px; border: 1px solid #6c6c6c; border-radius: 3px; background: #a6a6a6; }
    .bar { display: flex; height: 13px; align-items: center; background: #f6f6f6; padding: 0 12px 0 17px; }
    .scale { width: 32px; color: #111; justify-content: flex-start; }
    .ctl { width: 13px; }
    .hthumb { width: 11px; height: 9px; background: #cdcdcd; }
    .num { font-size: 8px; font-weight: bold; fill: #111a3c; }
    .face { font-size: 8px; fill: #4c4c4c; }
    .side { font-size: 5px; fill: #555; }
  `];
  private beam(p: number[], w: number) {
    return svg`<line x1=${p[0]} y1=${p[1]} x2=${p[2]} y2=${p[3]} stroke="#20401f" stroke-width=${w}/><line x1=${p[0]} y1=${p[1]} x2=${p[2]} y2=${p[3]} stroke="#7e917c" stroke-width="1"/>`;
  }
  render() {
    return html`
      <div class="tabs" role="tablist">
        <div class="tab" role="tab">${ic("view3d")}<span>{3D}</span></div>
        <div class="tab on" role="tab">${ic("view3d")}<span>{3D}</span><button class="x" aria-label="Chiudi">${ic("close")}</button></div>
        <button class="list" aria-label="Elenco schede">${ic("custom")}</button>
      </div>
      <div class="mid">
        <div class="scene">
          <svg class="drawing" viewBox="251 123 938 521" preserveAspectRatio="xMidYMid slice">
            <g fill="none" stroke="#1c1c1c" stroke-width="1" stroke-dasharray="13 9 2 9">
              <path d="M474 252L947 140"/><path d="M948 140L1071 568"/>
            </g>
            <circle cx="1071" cy="568" r="1" fill="#2a6ac0"/>
            <g fill="none" stroke="#2f8a38" stroke-width="1" stroke-dasharray="7 5">
              <path d="M711.500 154v42" stroke-dasharray="4 2"/><path d="M711 196L834 624"/>
              <path d="M1009.500 312v42" stroke-dasharray="4 2"/><path d="M1009 354L545 465"/>
            </g>
            <g fill="none" stroke="#2598cc" stroke-width="1">
              <path d="M914 187L837 298L769 420M914 187L852 303L772 420"/>
              ${anchors.map(([x, y]) => svg`<g transform="translate(${x} ${y})">
                <path d="M-16.500 -9L10 -15L17 9L-10 15.500ZM-14.500 0L12 -6.500M-12 8L14 1.500M-3 -17L4 17M-1 -17L3 17M7 -14L13 10M-4.500 -14.500h4M-11 -10L-9 -1"/></g>`)}
            </g>
            ${chords.map((c) => this.beam(c, 3.4))}
            ${webs.map((c) => this.beam(c, 3))}
            ${thinLines.map(([a, b, c, d, s]) => svg`<line x1=${a} y1=${b} x2=${c} y2=${d} stroke="#14501c" stroke-width="1.200" stroke-dasharray=${s || nothing}/>`)}
            ${arrows.map(([x, y]) => svg`<path d="M${x} ${y - 3}l2.500 4h-5zM${x} ${y}v3" fill="#2a2030" stroke="#2a2030" stroke-width=".6"/>`)}
            ${nodes.map(([x, y]) => svg`<circle cx=${x} cy=${y} r="3.900" fill="#7d3488"/>`)}
            ${anchors.map(([x, y, n]) => svg`<text class="num" x=${x - 3} y=${y - 12}>${n}</text>`)}
          </svg>
          <svg class="cube" width="42" height="50" viewBox="0 0 42 50">
            <path d="M2 8L30 2L39 28L38 40L12 46L9 33Z" fill="#8f8f8f" opacity=".5"/>
            <path d="M1 6.500L30 1L39 26L9 34.500Z" fill="#c9c9c9" stroke="#b4b4b4" stroke-width=".6"/>
            <path d="M9 34.500L39 26L37.500 38L10 45Z" fill="#bdbdbd" stroke="#9a9a9a" stroke-width=".6"/>
            <path d="M7.500 34L39 26" stroke="#777" stroke-width=".8"/>
            <text class="face" transform="translate(16 9) rotate(76)">ALTO</text>
            <text class="side" transform="translate(14 41) rotate(-13)">FRONTE</text>
          </svg>
          <svg class="nav" viewBox="0 0 22 74">
            <circle cx="17" cy="4.500" r="2.200" fill="none" stroke="#666" stroke-width=".8"/>
            <circle cx="10" cy="19" r="6" fill="#d4d4d4" stroke="#888"/><circle cx="10" cy="19" r="2.500" fill="#c0c0c0" stroke="#888"/>
            <rect x="11" y="21" width="7" height="6" rx="1" fill="#5c93cc" stroke="#3c6ea4" stroke-width=".7"/>
            <path d="M8.500 32h3L10 33.500zM8.500 58h3L10 59.500z" fill="#444"/><path d="M2 36h17" stroke="#858585"/>
            <path d="M5 42h8v5H5z" fill="#8fc06a" stroke="#5c9a3c"/><circle cx="12" cy="48" r="2" fill="#ddd" stroke="#888"/><path d="M13 50l2 2" stroke="#777"/>
            <circle cx="17" cy="68.500" r="2.200" fill="none" stroke="#666" stroke-width=".8"/>
          </svg>
        </div>
        <div class="vbar">${ic("up")}<span class="grow"></span><span class="vthumb"></span><span class="grow2"></span>${ic("down")}</div>
      </div>
      <div class="bar">
        <button class="scale">1 : 24</button>
        ${["vDetail", "vStyle", "vSun", "vCrop", "vLock", "vGlass", "vHide", "vReveal"].map((n) => html`<button class="ctl" aria-label=${n}>${ic(n)}</button>`)}
        <button class="ctl" aria-label="Sinistra">${ic("left")}</button>
        <span class="grow"></span><span class="hthumb"></span><span class="grow2"></span>
        <button aria-label="Destra">${ic("right")}</button>
      </div>`;
  }
}

/* -------------------------------------------------------------------- root */
@customElement("app-root")
class AppRoot extends LitElement {
  @property() hint = "Fare clic per selezionare, premere TAB per alternare, CTRL per aggiungere e MAIUSC per deselezionare.";
  static styles = [base, css`
    :host { display: flex; flex-direction: column; height: 100vh; background: #cacaca; color: #111; font-family: "Open Sans", "Noto Sans", sans-serif; font-size: 7px; line-height: 10px; overflow: hidden; }
    .main { display: flex; flex: 1; min-height: 0; gap: 2px; }
    .status { display: flex; height: 17px; align-items: center; padding: 0 58px 0 2px; color: #000; }
    .icons { margin-left: auto; display: flex; gap: 4px; align-items: center; }
  `];
  render() {
    return html`
      <title-bar></title-bar>
      <app-ribbon></app-ribbon>
      <div class="main"><property-panel></property-panel><model-view></model-view></div>
      <footer class="status">
        <span>${this.hint}</span>
        <div class="icons">
          ${["sLink", "sUnder", "sPin", "sFace", "sDrag", "sGear"].map((n) => html`<button aria-label=${n}>${ic(n)}</button>`)}
          <button>${ic("sFilter")}:0</button>
        </div>
      </footer>`;
  }
}
